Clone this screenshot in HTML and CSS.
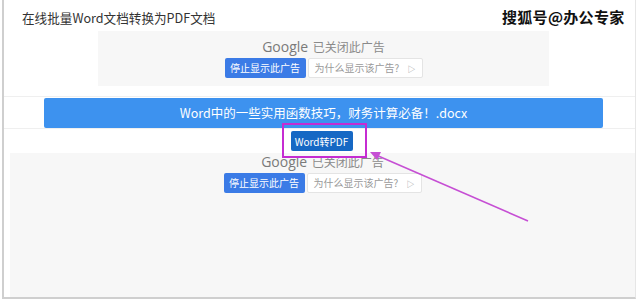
FILE: index.html
```html
<!DOCTYPE html>
<html lang="zh-CN">
<head>
  <meta charset="UTF-8" />
  <title>在线批量Word文档转换为PDF文档</title>
  <link rel="stylesheet" href="styles.css">
</head>
<body>

  <div class="frame">
    <div class="head">在线批量Word文档转换为PDF文档</div>

    <div class="ad ad-top">
      <div class="ad-title"><span class="g">Google</span> 已关闭此广告</div>
      <div class="ad-btns">
        <span class="ad-stop">停止显示此广告</span>
        <span class="ad-why">为什么显示该广告? <span class="tri">▷</span></span>
      </div>
    </div>

    <div class="file-row">
      <div class="file-bar">Word中的一些实用函数技巧，财务计算必备！.docx</div>
    </div>

    <div class="convert-row">
      <button class="convert">Word转PDF</button>
    </div>

    <div class="ad ad-bottom">
      <div class="ad-title"><span class="g">Google</span> 已关闭此广告</div>
      <div class="ad-btns">
        <span class="ad-stop">停止显示此广告</span>
        <span class="ad-why">为什么显示该广告? <span class="tri">▷</span></span>
      </div>
    </div>
  </div>

  <!-- annotation overlays -->
  <div class="mark"></div>
  <svg class="arrow" width="640" height="299" viewBox="0 0 640 299">
    <line x1="528" y1="221" x2="376" y2="155" stroke="#c64fd4" stroke-width="1.6"/>
    <polygon points="370,152 381,152 377,160" fill="#c64fd4"/>
  </svg>
  <div class="watermark">搜狐号@办公专家</div>

</body>
</html>
```

FILE: styles.css
```css
* {
  box-sizing: border-box;
  margin: 0;
  padding: 0;
}

body {
  width: 640px;
  height: 299px;
  background: #ffffff;
  font-family: "Noto Sans CJK SC", "Noto Sans", sans-serif;
  position: relative;
  overflow: hidden;
}

.frame {
  margin-left: 2px;
  width: 634px;
  height: 299px;
  border-left: 2px solid #cfcfcf;
  border-right: 1px solid #e6e6e6;
  border-bottom: 2px solid #cfcfcf;
  display: flex;
  flex-direction: column;
}

.head {
  height: 31px;
  padding: 9px 0 0 18px;
  font-size: 12.6px;
  line-height: 18px;
  color: #333;
}

.ad {
  background: #f7f7f7;
  display: flex;
  flex-direction: column;
  align-items: center;
}

.ad-top {
  margin-left: 94px;
  width: 451px;
  height: 55px;
  padding-top: 7px;
}

.ad-bottom {
  margin-left: 6px;
  flex: 1;
  padding-top: 0;
}

.ad-title {
  font-size: 12px;
  line-height: 18px;
  color: #8a8a8a;
  margin-bottom: 2px;
  white-space: nowrap;
}

.ad-title .g {
  font-family: "Open Sans", "Noto Sans", sans-serif;
  font-size: 14px;
  color: #7a7a7a;
  margin-right: 2px;
}

.ad-btns {
  display: flex;
  gap: 2px;
}

.ad-stop {
  width: 81px;
  height: 20px;
  background: #3b7be6;
  color: #fff;
  font-size: 10px;
  line-height: 20px;
  text-align: center;
  border-radius: 2px;
  white-space: nowrap;
}

.ad-why {
  width: 115px;
  height: 20px;
  background: #fff;
  color: #9a9a9a;
  font-size: 10px;
  line-height: 18px;
  padding-left: 6px;
  border: 1px solid #e4e4e4;
  border-radius: 2px;
  white-space: nowrap;
}

.ad-why .tri {
  font-size: 8px;
  margin-left: 6px;
}

.file-row {
  margin-top: 10px;
  border-top: 1px solid #efefef;
  border-bottom: 1px solid #efefef;
  padding: 1px 0 0 40px;
  height: 33px;
}

.file-bar {
  width: 559px;
  height: 30px;
  background: #3d92ef;
  color: #fff;
  border-radius: 2px;
  font-size: 12.5px;
  line-height: 30px;
  text-align: center;
}

.convert-row {
  height: 24px;
  display: flex;
  justify-content: center;
  padding: 2px 0 0 4px;
}

.convert {
  width: 62px;
  height: 20px;
  background: #1668c4;
  color: #fff;
  border: none;
  border-radius: 2px;
  font-family: "Noto Sans CJK SC", "Noto Sans", sans-serif;
  font-size: 10px;
}

.mark {
  position: absolute;
  left: 282px;
  top: 123px;
  width: 85px;
  height: 35px;
  border: 2px solid #c52cd2;
}

.arrow {
  position: absolute;
  left: 0;
  top: 0;
}

.watermark {
  position: absolute;
  left: 502px;
  top: 6px;
  font-size: 15px;
  font-weight: bold;
  color: #111;
  letter-spacing: 0.3px;
  text-shadow: 1px 1px 0 #fff, -1px -1px 0 #fff, 1px -1px 0 #fff, -1px 1px 0 #fff;
}
```
